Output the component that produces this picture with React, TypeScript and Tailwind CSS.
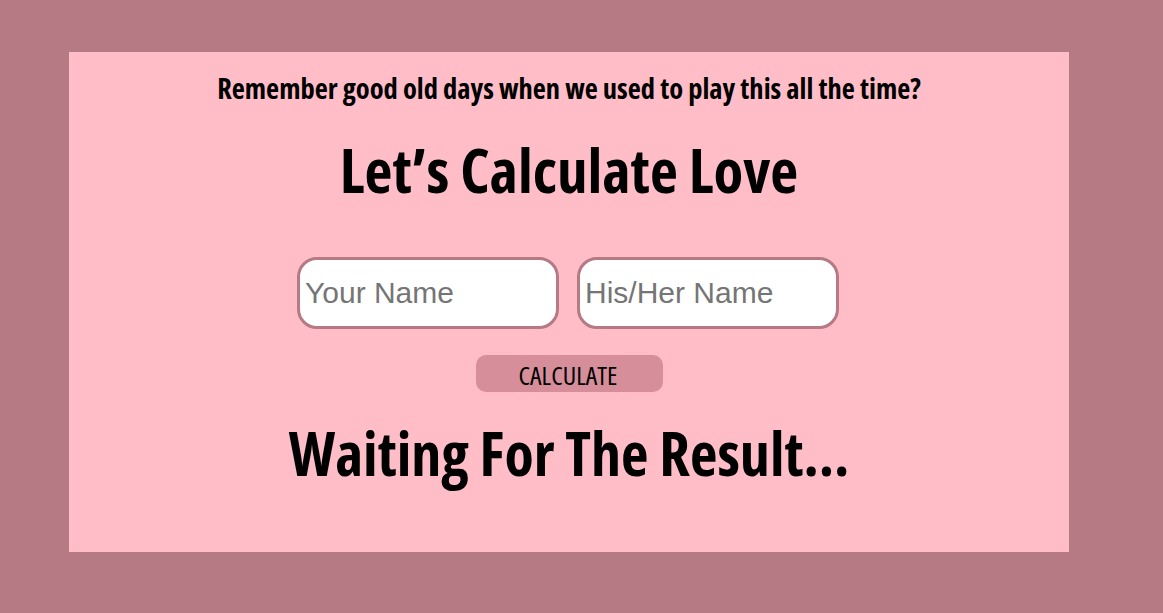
import React from "react";

const App = () => {
  return (
    <div className="min-h-screen w-full bg-[#b67a84] pt-[52px] pl-[69px] pb-[62px]">
      {/* CARD */}
      <div className="w-[1000px] h-[500px] bg-[#ffbdc8] flex flex-col items-center text-black font-['Open_Sans',sans-serif] font-stretch-condensed">
        <p className="mt-[16px] text-[28.5px] leading-[40px] font-bold">
          Remember good old days when we used to play this all the time?
        </p>
        <h1 className="mt-[26px] text-[61px] leading-[72px] font-bold">
          Let’s Calculate Love
        </h1>
        {/* INPUTS */}
        <div className="mt-[51px] flex gap-[18px] pr-[2px]">
          <input
            type="text"
            placeholder="Your Name"
            className="w-[262px] h-[72px] bg-white border-[3px] border-[#b57a83] rounded-[20px] pl-[5px] pr-2 text-[30px] text-black placeholder:text-[#757575] outline-none font-['Liberation_Sans',Arial,sans-serif] font-stretch-normal"
          />
          <input
            type="text"
            placeholder="His/Her Name"
            className="w-[262px] h-[72px] bg-white border-[3px] border-[#b57a83] rounded-[20px] pl-[5px] pr-2 text-[30px] text-black placeholder:text-[#757575] outline-none font-['Liberation_Sans',Arial,sans-serif] font-stretch-normal"
          />
        </div>
        {/* BUTTON */}
        <button className="mt-[26px] w-[187px] h-[37px] bg-[#d68f9a] rounded-[10px] text-[26px] leading-none text-black flex items-center justify-center pt-[2px] pr-[2px]">
          CALCULATE
        </button>
        <h2 className="mt-[25px] text-[60px] leading-[72px] font-bold">
          Waiting For The Result...
        </h2>
      </div>
    </div>
  );
};

export default App;
